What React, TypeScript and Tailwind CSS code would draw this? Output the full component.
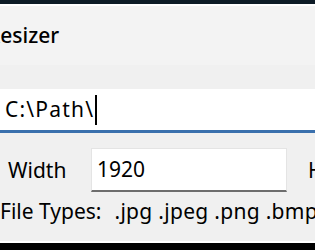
export default function App() {
  const font = { fontFamily: '"Noto Sans", "Open Sans", sans-serif' };

  return (
    <div
      className="flex h-[250px] w-[315px] flex-col overflow-hidden bg-[#f0f0f0] text-black"
      style={font}
    >
      {/* window top edge */}
      <div className="h-[4px] shrink-0 bg-[#0d1b26]" />
      <div className="h-[2px] shrink-0 bg-white" />

      {/* title */}
      <div className="flex h-[59px] shrink-0 items-center bg-[#f3f3f3]">
        <span className="-ml-[13px] text-[21px] font-medium leading-none">Resizer</span>
      </div>

      <div className="h-[24px] shrink-0" />

      {/* path input */}
      <div className="flex h-[44px] shrink-0 items-center border-b-[3px] border-[#3a70ad] bg-white pl-[5px]">
        <span className="text-[21px] leading-none tracking-[1.2px]">C:\Path\</span>
        <span className="ml-[1px] h-[30px] w-[2px] bg-black" />
      </div>

      <div className="h-[15px] shrink-0" />

      {/* width row */}
      <div className="flex h-[44px] shrink-0 items-center whitespace-nowrap">
        <span className="ml-[8px] w-[83px] shrink-0 text-[21px] leading-none">Width</span>
        <div className="flex h-full w-[196px] shrink-0 items-center border border-b-[2px] border-[#e4e4e4] border-b-[#6d6d6d] bg-white pl-[5px]">
          <span className="text-[21px] leading-none">1920</span>
        </div>
        <span className="ml-[21px] shrink-0 text-[21px] leading-none">Height</span>
      </div>

      {/* file types */}
      <div className="mt-[9px] flex shrink-0 items-center whitespace-nowrap text-[21px] leading-none">
        <span>File Types:</span>
        <span className="ml-[13px] tracking-[0.3px]">.jpg .jpeg .png .bmp</span>
      </div>

      <div className="flex-1" />
      <div className="h-[2px] shrink-0 bg-white" />
      <div className="h-[7px] shrink-0 bg-black" />
    </div>
  );
}
